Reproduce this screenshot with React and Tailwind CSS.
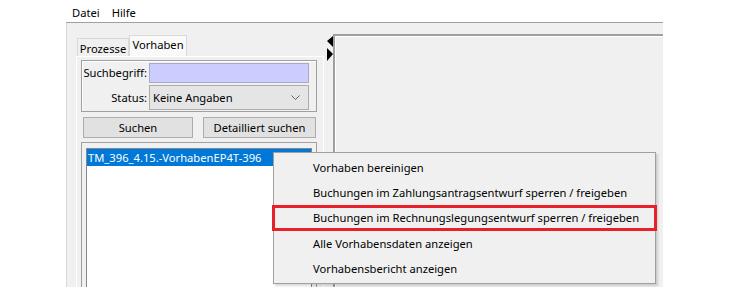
import React from "react";

const MENU_ITEMS = [
  { label: "Vorhaben bereinigen", h: "h-[24px]" },
  { label: "Buchungen im Zahlungsantragsentwurf sperren / freigeben", h: "h-[25px]" },
  { label: "Buchungen im Rechnungslegungsentwurf sperren / freigeben", h: "h-[26px]" },
  { label: "Alle Vorhabensdaten anzeigen", h: "h-[25px]" },
  { label: "Vorhabensbericht anzeigen", h: "h-[26px]" },
];

function ContextMenu() {
  return (
    <div className="absolute left-[273px] top-[152px] w-[383px] h-[132px] border border-[#a0a0a0] bg-[#f0f0f0] pt-[3px] shadow-[2px_2px_2px_rgba(0,0,0,0.15)]">
      {MENU_ITEMS.map((item) => (
        <div key={item.label} className={`${item.h} flex items-center pl-[39px] text-black whitespace-nowrap`}>
          {item.label}
        </div>
      ))}
      {/* highlight frame around the third entry */}
      <div className="absolute left-[-2px] right-[-2px] top-[52px] h-[26px] border-[3px] border-[#e8202a]" />
    </div>
  );
}

function Splitter() {
  return (
    <div className="w-[9px] flex flex-col pl-[3px] pt-[13px]">
      <svg width="6" height="26" viewBox="0 0 6 26">
        <polygon points="6,0 0,5 6,11" fill="#000" />
        <polygon points="0,12 6,18 0,25" fill="#000" />
      </svg>
    </div>
  );
}

export default function App() {
  return (
    <div
      className="relative w-[732px] h-[300px] bg-white overflow-hidden text-[11.2px] leading-[16px] text-black"
      style={{ fontFamily: '"Noto Sans", "Open Sans", sans-serif' }}
    >
      <div className="ml-[66px] w-[597px]">
        {/* Menu bar */}
        <div className="h-[23px] flex items-center gap-[12px] pl-[6px] pt-[3px] border-b border-[#a0a0a0]">
          <span>Datei</span>
          <span>Hilfe</span>
        </div>

        {/* Window body */}
        <div className="h-[264px] bg-[#f0f0f0] flex border-l border-[#d8d8d8]">
          {/* Left side with tabs */}
          <div className="ml-[9px] w-[248px] flex flex-col pt-[12px]">
            <div className="h-[21px] flex items-end pl-[1px]">
              <div className="h-[18px] w-[52px] border border-b-0 border-[#d9d9d9] flex items-center justify-center pt-[2px]">
                Prozesse
              </div>
              <div className="h-[21px] w-[58px] border border-b-0 border-[#d9d9d9] bg-[#f9f9f9] flex items-center justify-center pb-[2px]">
                Vorhaben
              </div>
            </div>

            <div className="flex-1 border border-b-0 border-white flex flex-col pl-[4px] pr-[6px] pt-[3px]">
              {/* Search group */}
              <div className="h-[52px] border border-[#a0a0a0] shadow-[inset_1px_1px_0_#fff] flex flex-col pt-[2px]">
                <div className="flex items-center h-[20px]">
                  <span className="w-[65px] text-right">Suchbegriff:</span>
                  <div className="ml-[2px] w-[160px] h-[20px] bg-[#ccccff] border border-[#a9a9c9]" />
                </div>
                <div className="flex items-center h-[25px] mt-[2px]">
                  <span className="w-[65px] text-right">Status:</span>
                  <div className="ml-[2px] w-[160px] h-[25px] bg-[#e5e5e5] border border-[#acacac] flex items-center justify-between pl-[3px] pr-[8px]">
                    <span>Keine Angaben</span>
                    <svg width="9" height="5" viewBox="0 0 9 5">
                      <polyline points="0.5,0.5 4.5,4.5 8.5,0.5" fill="none" stroke="#606060" strokeWidth="1" />
                    </svg>
                  </div>
                </div>
              </div>

              {/* Buttons */}
              <div className="mt-[5px] flex gap-[10px] pl-[2px]">
                <button className="w-[110px] h-[21px] bg-[#e1e1e1] border border-[#adadad] flex items-center justify-center">
                  Suchen
                </button>
                <button className="w-[113px] h-[21px] bg-[#e1e1e1] border border-[#adadad] flex items-center justify-center">
                  Detailliert suchen
                </button>
              </div>

              {/* Result list */}
              <div className="mt-[4px] flex-1 w-[236px] border border-b-0 border-[#a0a0a0] pt-[5px] pl-[4px] pr-[4px]">
                <div className="h-full border border-b-0 border-[#828790] bg-white">
                  <div className="h-[17px] bg-[#0078d7] text-white flex items-center pl-[1px] whitespace-nowrap">
                    TM_396_4.15.-VorhabenEP4T-396
                  </div>
                </div>
              </div>
            </div>
          </div>

          <Splitter />

          {/* Right panel */}
          <div className="flex-1 mt-[11px] border-t-2 border-l-2 border-[#a0a0a0]">
            <div className="h-full border-t border-l border-white bg-[#f0f0f0]" />
          </div>
        </div>
      </div>

      <ContextMenu />
    </div>
  );
}
